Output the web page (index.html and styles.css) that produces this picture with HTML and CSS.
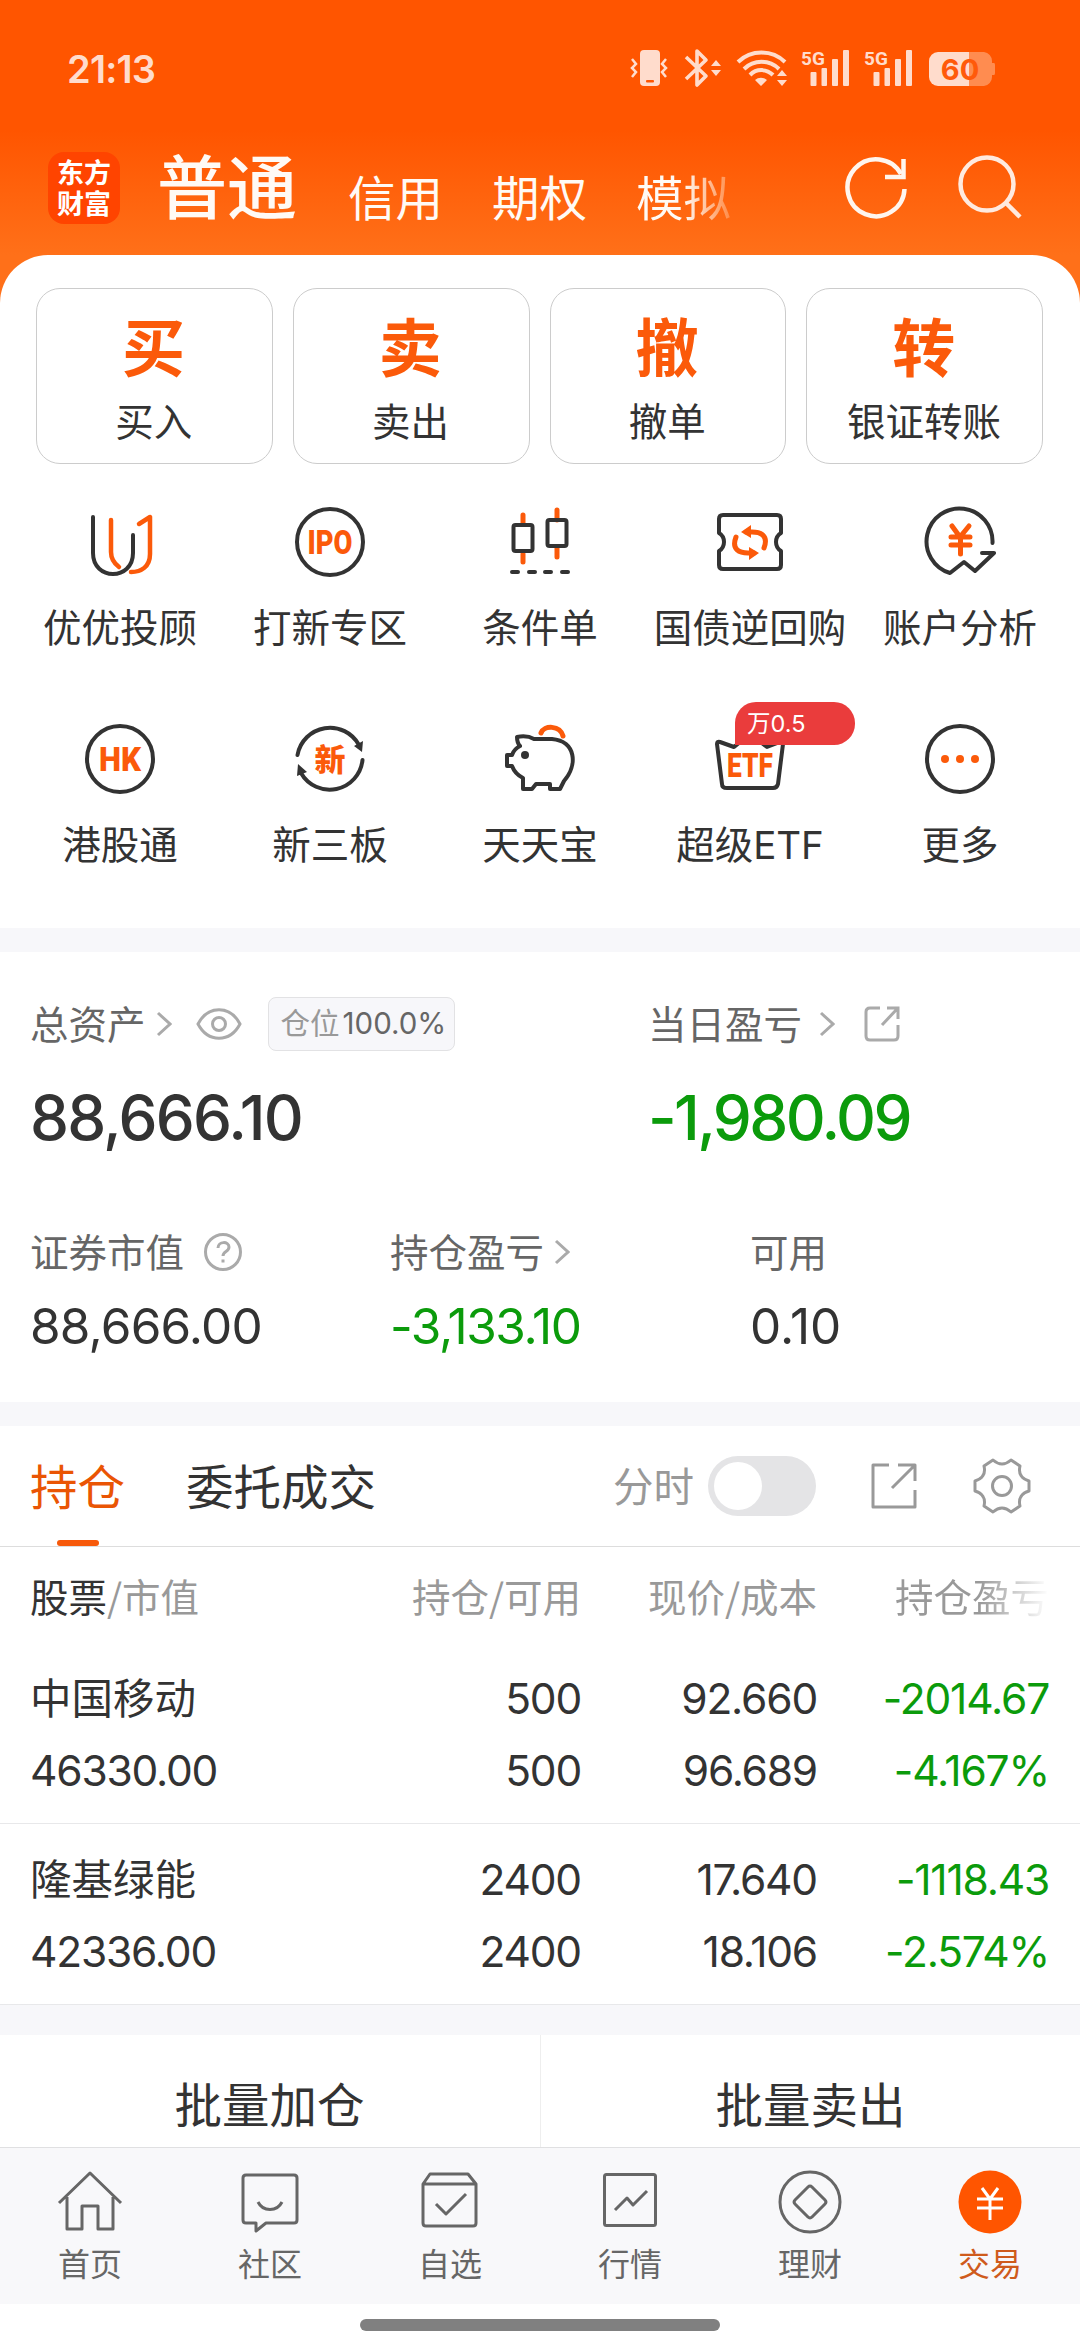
FILE: index.html
```html
<!DOCTYPE html>
<html lang="zh-CN">
<head>
  <meta charset="UTF-8">
  <meta name="viewport" content="width=device-width, initial-scale=1.0">
  <title>交易</title>
  <link rel="stylesheet" href="styles.css">
</head>
<body>
  <header class="top">
    <div class="status">
      <span class="time">21:13</span>
      <svg class="status-icons" width="368" height="40" viewBox="0 0 368 40" fill="#ffdccc">
        <!-- vibrate -->
        <rect x="10" y="1" width="20" height="36" rx="4"/>
        <rect x="16" y="31" width="8" height="2.5" rx="1" fill="#ff5500"/>
        <path d="M3 10l4 5-4 4 4 4-4 5M37 10l-4 5 4 4-4 4 4 5" transform="translate(-1 0)" fill="none" stroke="#ffdccc" stroke-width="2.5"/>
        <!-- bluetooth -->
        <path d="M56 8l20 19-9 9V2l9 9-20 19" fill="none" stroke="#ffdccc" stroke-width="3.6" stroke-linejoin="round"/>
        <path d="M81 17l5-6 5 6zM81 21l5 6 5-6z"/>
        <!-- wifi -->
        <g fill="none" stroke="#ffdccc" stroke-width="4">
          <path d="M108 13a34 34 0 0 1 47 0"/>
          <path d="M114 20a25 25 0 0 1 35 0"/>
          <path d="M120 26a16 16 0 0 1 23 0"/>
        </g>
        <path d="M125 31a9 9 0 0 1 12 0l-6 6zM147 27l5-6 5 6zM147 31l5 6 5-6z"/>
        <!-- signals -->
        <text class="net" x="171" y="16">5G</text>
        <rect x="180.500" y="23" width="6" height="14" rx="1"/><rect x="191.500" y="19" width="5.500" height="18" rx="1"/><rect x="202" y="10" width="6" height="27" rx="1"/><rect x="213" y="1" width="6" height="36" rx="1"/>
        <text class="net" x="234" y="16">5G</text>
        <rect x="243.500" y="23" width="6" height="14" rx="1"/><rect x="254.500" y="19" width="5.500" height="18" rx="1"/><rect x="265" y="10" width="6" height="27" rx="1"/><rect x="276" y="1" width="6" height="36" rx="1"/>
        <!-- battery -->
        <path d="M339 3h15a9 9 0 0 1 8 9v2h2q1 0 1 2v8q0 2-1 2h-2v2a9 9 0 0 1-8 9h-15z" fill="#ff8c50"/>
        <path d="M339 3h-31a9 9 0 0 0-9 9v16a9 9 0 0 0 9 9h31z"/>
        <text class="battery" x="330" y="30.500" text-anchor="middle">60</text>
      </svg>
    </div>
    <div class="nav-top">
      <div class="logo">东方财富</div>
      <nav class="accounts">
        <a class="current">普通</a>
        <a>信用</a>
        <a>期权</a>
        <a class="faded">模拟</a>
      </nav>
      <svg class="refresh" width="66" height="66" viewBox="0 0 66 66" fill="none" stroke="#fff5ee" stroke-width="4.500">
        <path d="M60.500 34A28.500 28.500 0 1 1 57 19"/>
        <path d="M59.500 4v18H41"/>
      </svg>
      <svg class="search" width="66" height="66" viewBox="0 0 66 66" fill="none" stroke="#ffeadf" stroke-width="4.500">
        <circle cx="31" cy="29" r="26.500"/>
        <path d="M50 48l14 14"/>
      </svg>
    </div>
  </header>

  <main>
    <section class="actions">
      <div class="action"><b>买</b><span>买入</span></div>
      <div class="action"><b>卖</b><span>卖出</span></div>
      <div class="action"><b>撤</b><span>撤单</span></div>
      <div class="action"><b>转</b><span>银证转账</span></div>
    </section>

    <section class="tools">
      <div class="tool">
        <svg viewBox="0 0 72 72">
          <path d="M9 11v36c0 28 40 28 40 0V29"/>
          <path class="o" stroke-width="4.500" d="M27 14v32q0 9 8 15M55 18l11-7v37c0 13-9 18-19 18"/>
        </svg>
        <span>优优投顾</span>
      </div>
      <div class="tool">
        <svg viewBox="0 0 72 72"><circle cx="36" cy="36" r="33"/><text x="36" y="47.500" font-size="33" textLength="45" lengthAdjust="spacingAndGlyphs">IPO</text></svg>
        <span>打新专区</span>
      </div>
      <div class="tool">
        <svg viewBox="0 0 72 72">
          <path class="o" stroke-width="5" d="M19 9v9M19 48v8M53 4v10M53 42v9"/>
          <rect x="9.500" y="19" width="19" height="26" rx="2"/>
          <rect x="43.500" y="14" width="19" height="26" rx="2"/>
          <path d="M8 66h6M25 66h6M41 66h6M58 66h6"/>
        </svg>
        <span>条件单</span>
      </div>
      <div class="tool">
        <svg viewBox="0 0 72 72">
          <path d="M9 9h54q4 0 4 4v14q-5 3-5 9t5 9v14q0 4-4 4H9q-4 0-4-4V45q5-3 5-9t-5-9V13q0-4 4-4z"/>
          <path class="o" stroke-width="5" d="M22 31c-5 13 4 16 12 16h6M50 42c5-13-4-16-12-16h-6"/>
          <path class="of" d="M37 19v13l-10-6zM35 41v13l10-7z"/>
        </svg>
        <span>国债逆回购</span>
      </div>
      <div class="tool">
        <svg viewBox="0 0 72 72">
          <path d="M68.500 37A33 33 0 1 0 26 67l14-11 11 9 19-18H58"/>
          <path class="o" stroke-width="5" d="M28 20l8 11 9-11M27 31h19M27 39h19M36.500 31v17"/>
        </svg>
        <span>账户分析</span>
      </div>
      <div class="tool">
        <svg viewBox="0 0 72 72"><circle cx="36" cy="36" r="33"/><text x="36" y="47.500" font-size="33" textLength="42" lengthAdjust="spacingAndGlyphs">HK</text></svg>
        <span>港股通</span>
      </div>
      <div class="tool">
        <svg viewBox="0 0 72 72">
          <path d="M3.500 32A33 33 0 0 1 65 22M68.500 37A33 33 0 0 1 7 50"/>
          <path class="df" d="M60 23l9-5-1 11zM3 53l1-12 9 8z"/>
          <text class="cjk" x="36" y="47.500" font-size="31" textLength="32">新</text>
        </svg>
        <span>新三板</span>
      </div>
      <div class="tool">
        <svg viewBox="0 0 72 72">
          <path class="o" stroke-width="5" d="M37 10c3-8 19-8 22 3"/>
          <path d="M13 14q10-2 17 2h18c24 2 26 26 12 42l-4 8H46v-5H32l-4 5H19V55q-8-4-11-12H3V32h5q2-6 8-9-3-3-3-9z"/>
          <circle class="df" cx="21" cy="32" r="4"/>
        </svg>
        <span>天天宝</span>
      </div>
      <div class="tool">
        <svg viewBox="0 0 72 72">
          <path d="M13 65h46q4 0 5-4l5-40q0-3-3-2l-13 5-17-13-16 13-14-5q-3-1-3 2l5 40q0 4 5 4z"/>
          <text x="36" y="54" font-size="33" textLength="46" lengthAdjust="spacingAndGlyphs">ETF</text>
        </svg>
        <span>超级ETF</span>
        <em class="badge">万0.5</em>
      </div>
      <div class="tool">
        <svg viewBox="0 0 72 72"><circle cx="36" cy="36" r="33"/><g class="of"><circle cx="21" cy="36" r="4"/><circle cx="36" cy="36" r="4"/><circle cx="51" cy="36" r="4"/></g></svg>
        <span>更多</span>
      </div>
    </section>

    <section class="assets">
      <div class="main-assets">
        <div class="cell">
          <div class="label">总资产
            <svg class="arrow" width="16" height="26" viewBox="0 0 16 26"><path d="M2 2l12 11L2 24"/></svg>
            <svg class="eye" width="46" height="34" viewBox="0 0 46 34"><path d="M2 17C12-2 34-2 44 17C34 36 12 36 2 17z"/><circle cx="23" cy="17" r="6.500"/></svg>
            <span class="position">仓位<i>100.0%</i></span>
          </div>
          <div class="big total">88,666.10</div>
        </div>
        <div class="cell">
          <div class="label">当日盈亏
            <svg class="arrow wide" width="16" height="26" viewBox="0 0 16 26"><path d="M2 2l12 11L2 24"/></svg>
            <svg class="share" width="38" height="38" viewBox="0 0 38 38"><path d="M17 3H7q-4 0-4 4v24q0 4 4 4h24q4 0 4-4V20M24 3h11v11M34 4L19 20"/></svg>
          </div>
          <div class="big today green">-1,980.09</div>
        </div>
      </div>
      <div class="sub-assets">
        <div class="cell">
          <div class="label">证券市值
            <svg class="help" width="40" height="40" viewBox="0 0 40 40"><circle cx="20" cy="20" r="17.500"/><path d="M15 16c0-7 11-7 11-1 0 5-6 4-6 9M20 27.500v3"/></svg>
          </div>
          <div class="mid">88,666.00</div>
        </div>
        <div class="cell">
          <div class="label">持仓盈亏
            <svg class="arrow" width="16" height="26" viewBox="0 0 16 26"><path d="M2 2l12 11L2 24"/></svg>
          </div>
          <div class="mid tight green">-3,133.10</div>
        </div>
        <div class="cell">
          <div class="label">可用</div>
          <div class="mid loose">0.10</div>
        </div>
      </div>
    </section>

    <section class="holdings">
      <div class="tabs">
        <span class="tab active">持仓</span>
        <span class="tab">委托成交</span>
        <span class="minute">分时</span>
        <span class="switch"></span>
        <svg class="export" width="50" height="50" viewBox="0 0 50 50"><path d="M20 4H4v42h42V29M29 4h17v16M45 5L23 27"/></svg>
        <svg class="gear" width="58" height="58" viewBox="0 0 58 58"><path d="M20 3q9 8 18 0l9 6c-2 8 2 13 9 15v10c-7 2-11 7-9 15l-9 6q-9-8-18 0l-9-6c2-8-2-13-9-15V24c7-2 11-7 9-15z"/><circle cx="29" cy="29" r="9.500"/></svg>
      </div>
      <div class="row head">
        <span><strong>股票</strong>/市值</span>
        <span>持仓/可用</span>
        <span>现价/成本</span>
        <span class="cut">持仓盈亏</span>
      </div>
      <div class="row stock">
        <div><span class="name">中国移动</span><span>46330.00</span></div>
        <div><span>500</span><span>500</span></div>
        <div><span>92.660</span><span>96.689</span></div>
        <div class="green"><span>-2014.67</span><span>-4.167%</span></div>
      </div>
      <div class="row stock">
        <div><span class="name">隆基绿能</span><span>42336.00</span></div>
        <div><span>2400</span><span>2400</span></div>
        <div><span>17.640</span><span>18.106</span></div>
        <div class="green"><span>-1118.43</span><span>-2.574%</span></div>
      </div>
    </section>

    <section class="batch">
      <span>批量加仓</span>
      <span>批量卖出</span>
    </section>
  </main>

  <footer class="bottom">
    <a>
      <svg viewBox="0 0 66 66"><path d="M2 34L33 4l31 30M10 28v32h15V37h16v23h15V28"/></svg>
      首页
    </a>
    <a>
      <svg viewBox="0 0 66 66"><path d="M9 6h48q3 0 3 3v42q0 3-3 3H29l-10 8v-8H9q-3 0-3-3V9q0-3 3-3z"/><path d="M21 33c5 10 19 10 24 0"/></svg>
      社区
    </a>
    <a>
      <svg viewBox="0 0 66 66"><path d="M13 5h38l8 10v39q0 3-3 3H9q-3 0-3-3V15zM6 15h53M19 35l10 10 20-20"/></svg>
      自选
    </a>
    <a>
      <svg viewBox="0 0 66 66"><rect x="7.500" y="5.500" width="51" height="51" rx="2"/><path d="M18 41l12-12 6 7 14-14"/></svg>
      行情
    </a>
    <a>
      <svg viewBox="0 0 66 66"><circle cx="33" cy="33" r="30"/><path d="M33 17q1 0 2 1l13 13q2 2 0 4L35 48q-2 2-4 0L18 35q-2-2 0-4l13-13q1-1 2-1z"/></svg>
      理财
    </a>
    <a class="active">
      <svg viewBox="0 0 66 66"><circle class="disc" cx="33" cy="33" r="31.500"/><path class="yen" d="M25 19l8 11 8-11M20 30h26M20 39h26M33 30v21"/></svg>
      交易
    </a>
  </footer>
  <div class="home"></div>
</body>
</html>
```
FILE: styles.css
```css
* {
  box-sizing: border-box;
}
body {
  font-family: Inter, "Noto Sans CJK SC", sans-serif;
  margin: 0;
  width: 1080px;
  height: 2352px;
  overflow: hidden;
  background: #fff;
  color: #333;
  display: flex;
  flex-direction: column;
}
svg {
  display: block;
  flex: none;
}
span, a {
  white-space: nowrap;
}

/* header */
.top {
  height: 303px;
  background: linear-gradient(#ff5500 130px, #ff7019 255px);
}
.status {
  height: 128px;
  padding: 10px 0 0 67px;
  display: flex;
  align-items: center;
}
.status-icons {
  overflow: visible;
}
.time {
  width: 563px;
  font-size: 38px;
  font-weight: 600;
  letter-spacing: -0.8px;
  color: #ffdccc;
}
.net {
  font: 700 19px Roboto, sans-serif;
}
.battery {
  font: 700 29px Inter, sans-serif;
  fill: #ff5a0a;
}
.nav-top {
  height: 120px;
  padding-left: 48px;
  display: flex;
  align-items: center;
}
.logo {
  width: 72px;
  height: 72px;
  padding: 4px 9px;
  border-radius: 16px;
  background: #ff4400;
  color: #fff;
  font-family: "Noto Sans CJK SC", sans-serif;
  font-size: 27px;
  font-weight: 700;
  line-height: 31px;
}
.accounts {
  width: 686px;
  margin-left: 38px;
  padding-top: 9px;
  display: flex;
  align-items: baseline;
  gap: 49px;
  color: #fffaf5;
  font-size: 47.5px;
  line-height: 90px;
}
.accounts a {
  position: relative;
  top: 2px;
}
.accounts .current {
  top: 0;
  margin-left: -1px;
  margin-right: 2px;
  font-size: 70px;
  font-weight: 500;
}
.accounts .faded {
  background: linear-gradient(90deg, #fffaf5 50%, #ff8a45);
  background-clip: text;
  -webkit-background-clip: text;
  color: transparent;
}
.search {
  margin-left: 46px;
}

main {
  margin-top: -48px;
  height: 1892px;
  flex: none;
  border-radius: 48px 48px 0 0;
  background: #fff;
}
.actions {
  padding: 33px 37px 0 36px;
  display: flex;
  gap: 20px;
}
.action {
  flex: 1;
  height: 176px;
  border: 1px solid #ccc;
  border-radius: 24px;
  display: flex;
  flex-direction: column;
  align-items: center;
}
.action b {
  margin-top: 16px;
  margin-right: 2px;
  font-size: 63px;
  line-height: 86px;
  color: #fb5a0a;
}
.action span {
  margin-right: 1px;
  font-size: 38.5px;
  line-height: 62px;
}

/* shortcut grid */
.tools {
  height: 464px;
  padding: 42px 15px 0;
  display: grid;
  grid-template-columns: repeat(5, 210px);
  grid-auto-rows: 217px;
}
.tool {
  position: relative;
  display: flex;
  flex-direction: column;
  align-items: center;
  font-size: 38.5px;
  line-height: 60px;
}
.tool svg {
  width: 72px;
  height: 72px;
  margin-bottom: 20px;
  fill: none;
  stroke: #333;
  stroke-width: 4;
  stroke-linecap: round;
  stroke-linejoin: round;
}
.tool .o {
  stroke: #fb5a0a;
}
.tool .of {
  fill: #fb5a0a;
  stroke: none;
}
.tool .df {
  fill: #333;
  stroke: none;
}
.tool text {
  fill: #fb5a0a;
  stroke: none;
  font-family: Roboto, sans-serif;
  font-weight: 900;
  text-anchor: middle;
}
.tool .cjk {
  font-family: "Noto Sans CJK SC", sans-serif;
}
.badge {
  position: absolute;
  left: 90px;
  top: -21px;
  width: 120px;
  height: 43px;
  padding-left: 12px;
  border-radius: 21px 21px 21px 0;
  background: #ea3c3c;
  color: #fff;
  font-size: 23.5px;
  font-style: normal;
  line-height: 43px;
}

/* assets */
.assets {
  height: 498px;
  border: solid #f7f7fa;
  border-width: 24px 0;
}
.label {
  height: 54px;
  padding-bottom: 5px;
  display: flex;
  align-items: center;
  color: #666;
  font-size: 38.5px;
}
.label svg {
  margin-top: 4px;
  fill: none;
  stroke: #aaa;
  stroke-width: 3;
}
.main-assets {
  padding: 45px 30px 0;
  display: flex;
}
.main-assets .cell {
  width: 618px;
}
.main-assets .cell:last-child {
  width: 400px;
}
.arrow {
  margin-left: 10px;
}
.arrow.wide {
  margin-left: 17px;
}
.eye {
  margin-left: 24px;
}
.position {
  height: 54px;
  flex: none;
  margin-top: 5px;
  margin-left: 26px;
  padding: 0 8px 0 12px;
  border: 1px solid #e2e2e4;
  border-radius: 8px;
  background: #f7f7fa;
  color: #999;
  font-size: 29.5px;
  line-height: 51px;
}
.position i {
  margin-left: 3px;
  color: #666;
  font-style: normal;
}
.share {
  margin-left: 28px;
}
.help {
  margin-left: 19px;
}
.big {
  margin-top: 27px;
  font-size: 62px;
  font-weight: 500;
  line-height: 80px;
}
.total {
  letter-spacing: -1.8px;
}
.today {
  letter-spacing: -2.6px;
}
.sub-assets {
  padding: 67px 30px 0;
  display: flex;
}
.sub-assets .cell {
  width: 360px;
}
.sub-assets .cell:last-child {
  width: 200px;
}
.mid {
  margin-top: 17px;
  font-size: 49.5px;
  line-height: 60px;
  letter-spacing: -0.8px;
}
.mid.tight {
  letter-spacing: -1.4px;
}
.mid.loose {
  letter-spacing: 0;
}
.green {
  color: #0b9b0b;
}

/* holdings */
.tabs {
  height: 121px;
  padding-left: 30px;
  border-bottom: 1px solid #ddd;
  display: flex;
  align-items: center;
}
.tab {
  position: relative;
  height: 120px;
  margin-right: 61px;
  font-size: 47.5px;
  line-height: 123px;
}
.tab.active {
  color: #ea5504;
}
.tab.active::after {
  content: "";
  position: absolute;
  left: 27px;
  bottom: 0;
  width: 42px;
  height: 6px;
  border-radius: 3px;
  background: #f7590a;
}
.minute {
  margin-left: auto;
  padding-bottom: 3px;
  font-size: 40.5px;
  color: #999;
}
.switch {
  width: 108px;
  height: 60px;
  margin-left: 14px;
  padding: 6px;
  border-radius: 30px;
  background: #e4e4e6;
}
.switch::before {
  content: "";
  display: block;
  width: 48px;
  height: 48px;
  border-radius: 50%;
  background: #fff;
}
.export, .gear {
  fill: none;
  stroke: #999;
  stroke-width: 3;
  stroke-linejoin: round;
}
.export {
  margin-left: 53px;
}
.gear {
  margin: 0 49px 0 54px;
}
.row {
  padding: 0 30px;
  display: grid;
  grid-template-columns: 250px 301px 236px 232px;
  text-align: right;
}
.row > :first-child {
  text-align: left;
}
.head {
  height: 96px;
  color: #999;
  font-family: "Noto Sans CJK SC", sans-serif;
  font-size: 38.5px;
  line-height: 97px;
}
.head strong {
  color: #333;
  font-weight: 400;
}
.head .cut {
  margin-left: 78px;
  text-align: left;
  background: linear-gradient(90deg, #999 55%, #fff);
  background-clip: text;
  -webkit-background-clip: text;
  color: transparent;
}
.stock {
  height: 181px;
  padding-top: 20px;
  border-bottom: 1px solid #e8e8ea;
  font-size: 42.5px;
  letter-spacing: -1.2px;
}
.stock span {
  display: block;
  height: 72px;
  line-height: 72px;
}
.stock .name {
  font-size: 41.5px;
  letter-spacing: 0;
}
.batch {
  height: 142px;
  border-top: 30px solid #f7f7fa;
  display: flex;
}
.batch span {
  flex: 1;
  font-size: 47.5px;
  line-height: 142px;
  text-align: center;
}
.batch span:first-child {
  padding-right: 1px;
  border-right: 1px solid #eee;
}

/* bottom bar */
.bottom {
  height: 157px;
  flex: none;
  border-top: 1px solid #e0e0e2;
  background: #f8f8fa;
  display: flex;
}
.bottom a {
  flex: 1;
  padding-top: 21px;
  display: flex;
  flex-direction: column;
  align-items: center;
  color: #666;
  font-size: 32px;
  line-height: 60px;
}
.bottom svg {
  width: 66px;
  height: 66px;
  fill: none;
  stroke: #666;
  stroke-width: 3;
  stroke-linejoin: round;
}
.bottom .active {
  color: #cf5b1c;
}
.bottom .disc {
  fill: #ff5500;
  stroke: none;
}
.bottom .yen {
  stroke: #fff;
}
.home {
  width: 360px;
  height: 12px;
  flex: none;
  margin: 15px auto 0;
  border-radius: 6px;
  background: #808080;
}
```
